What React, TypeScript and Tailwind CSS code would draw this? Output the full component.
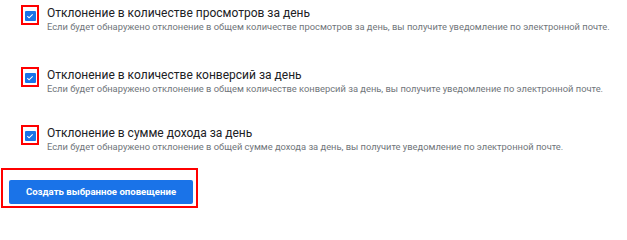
import React from "react";

const alerts = [
	{
		title: "Отклонение в количестве просмотров за день",
		text: "Если будет обнаружено отклонение в общем количестве просмотров за день, вы получите уведомление по электронной почте.",
		className: "mt-[5px]",
	},
	{
		title: "Отклонение в количестве конверсий за день",
		text: "Если будет обнаружено отклонение в общем количестве конверсий за день, вы получите уведомление по электронной почте.",
		className: "mt-[34px]",
	},
	{
		title: "Отклонение в сумме дохода за день",
		text: "Если будет обнаружено отклонение в общей сумме дохода за день, вы получите уведомление по электронной почте.",
		className: "mt-[30px]",
	},
];

const CheckBox = () => (
	<div className="w-[18px] h-[20px] border-2 border-[#ff0000] flex items-center justify-center shrink-0">
		<span className="mt-[2px] w-[11px] h-[10px] rounded-[1px] bg-[#1a73e8] flex items-center justify-center">
			<svg viewBox="0 0 12 12" className="w-[8px] h-[8px]">
				<path d="M2 6.3l2.6 2.5L10 3.4" fill="none" stroke="#fff" strokeWidth="1.6" />
			</svg>
		</span>
	</div>
);

export default function App() {
	return (
		<div className="w-[627px] h-[209px] bg-white overflow-hidden font-['Roboto',sans-serif]">
			{alerts.map((alert) => (
				<div key={alert.title} className={`flex items-start pl-[21px] ${alert.className}`}>
					<CheckBox />
					<div className="ml-[8px]">
						<div className="text-[12px] leading-[16px] text-[#202124]">{alert.title}</div>
						<div className="text-[9.33px] leading-[12px] text-[#70757a] whitespace-nowrap">{alert.text}</div>
					</div>
				</div>
			))}

			<div className="mt-[15px] ml-[1px] w-[197px] h-[40px] border-2 border-[#ff0000] pl-[6px] pt-[8px]">
				<button className="w-[184px] h-[24px] rounded-[2px] bg-[#1a73e8] text-white text-[9.6px] font-bold">
					Создать выбранное оповещение
				</button>
			</div>
		</div>
	);
}
